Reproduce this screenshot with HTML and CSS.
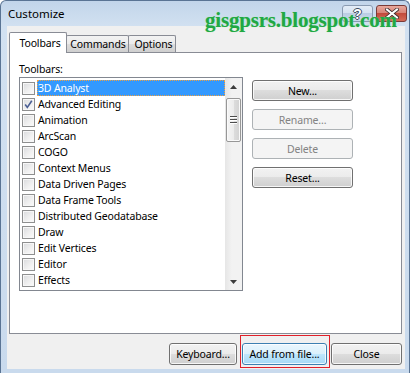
FILE: index.html
```html
<!DOCTYPE html>
<html>
<head>
<meta charset="utf-8">
<title>Customize</title>
<link rel="stylesheet" href="styles.css">
</head>
<body>
<div class="window">
  <div class="titlebar">
    <span class="title">Customize</span>
    <div class="caption-btns">
      <div class="cap help"><span class="q">?</span></div>
      <div class="cap close">
        <svg width="14" height="11" viewBox="0 0 14 11"><path d="M2 1.5 L12 9.5 M12 1.5 L2 9.5" stroke="#3a2a2a" stroke-width="3.6" stroke-linecap="square"/><path d="M2 1.5 L12 9.5 M12 1.5 L2 9.5" stroke="#ffffff" stroke-width="2" stroke-linecap="square"/></svg>
      </div>
    </div>
  </div>
  <div class="watermark">gisgpsrs.blogspot.com</div>
  <div class="client">
    <div class="tabs">
      <div class="tab active">Toolbars</div>
      <div class="tab t-commands">Commands</div>
      <div class="tab t-options">Options</div>
    </div>
    <div class="panel">
      <div class="label">Toolbars:</div>
      <div class="panel-body">
        <div class="listbox">
          <div class="items">
            <div class="item"><span class="cb"></span><span class="txt sel">3D Analyst</span></div>
            <div class="item"><span class="cb"><svg width="11" height="11" viewBox="0 0 11 11"><path d="M2.2 5.6 L4.3 8.4 L8.8 1.8" fill="none" stroke="#4b5f94" stroke-width="1.6"/></svg></span><span class="txt">Advanced Editing</span></div>
            <div class="item"><span class="cb"></span><span class="txt">Animation</span></div>
            <div class="item"><span class="cb"></span><span class="txt">ArcScan</span></div>
            <div class="item"><span class="cb"></span><span class="txt">COGO</span></div>
            <div class="item"><span class="cb"></span><span class="txt">Context Menus</span></div>
            <div class="item"><span class="cb"></span><span class="txt">Data Driven Pages</span></div>
            <div class="item"><span class="cb"></span><span class="txt">Data Frame Tools</span></div>
            <div class="item"><span class="cb"></span><span class="txt">Distributed Geodatabase</span></div>
            <div class="item"><span class="cb"></span><span class="txt">Draw</span></div>
            <div class="item"><span class="cb"></span><span class="txt">Edit Vertices</span></div>
            <div class="item"><span class="cb"></span><span class="txt">Editor</span></div>
            <div class="item"><span class="cb"></span><span class="txt">Effects</span></div>
          </div>
          <div class="scrollbar">
            <div class="sb-btn"><svg width="7" height="4" viewBox="0 0 7 4"><path d="M3.5 0 L7 4 L0 4 Z" fill="#3c3c3c"/></svg></div>
            <div class="sb-track">
              <div class="thumb"><span class="grip"></span><span class="grip"></span><span class="grip"></span></div>
            </div>
            <div class="sb-btn"><svg width="7" height="4" viewBox="0 0 7 4"><path d="M0 0 L7 0 L3.5 4 Z" fill="#3c3c3c"/></svg></div>
          </div>
        </div>
        <div class="side-btns">
          <div class="btn">New...</div>
          <div class="btn disabled">Rename...</div>
          <div class="btn disabled">Delete</div>
          <div class="btn">Reset...</div>
        </div>
      </div>
    </div>
    <div class="footer">
      <div class="btn b-keyboard">Keyboard...</div>
      <div class="annot">
        <div class="btn hot b-add">Add from file...</div>
        <div class="redbox"></div>
      </div>
      <div class="btn b-close">Close</div>
    </div>
  </div>
</div>
</body>
</html>
```

FILE: styles.css
```css
* { box-sizing: border-box; }
html, body { margin: 0; padding: 0; background: #ffffff; }
body {
  width: 414px; height: 373px; overflow: hidden;
  font-family: "Noto Sans", "Open Sans", sans-serif;
  font-size: 10.5px; letter-spacing: -0.15px; color: #000;
}
.window {
  position: relative;
  width: 410px; height: 373px;
  border: 1px solid #5a7494;
  border-bottom: none;
  border-radius: 6px 6px 0 0;
  background: linear-gradient(#c2d5ea 0, #d2e1f1 26px, #c9daed 100%);
  display: flex; flex-direction: column;
  padding: 0 4px 4px 6px;
}
.titlebar {
  height: 25px; flex: none;
  display: flex; align-items: flex-start; justify-content: space-between;
  margin-right: -2px;
}
.title { margin: 5px 0 0 1px; line-height: 16px; font-size: 11.5px; letter-spacing: 0; color: #000; }
.caption-btns { display: flex; gap: 3px; margin-top: 4px; }
.cap {
  height: 17px; border-radius: 3px;
  display: flex; align-items: center; justify-content: center;
}
.help {
  width: 31px;
  border: 1px solid #8a9bb2;
  background: linear-gradient(#e3ecf7 0, #d5e2f1 45%, #bccde3 50%, #c9d9ec 100%);
}
.q {
  font-family: "Liberation Sans", sans-serif; font-weight: bold; font-size: 14px; line-height: 14px; color: #fff;
  text-shadow: -1px 0 #3d4b5e, 1px 0 #3d4b5e, 0 -1px #3d4b5e, 0 1px #3d4b5e;
}
.close {
  width: 31px;
  border: 1px solid #7a3b37;
  background: linear-gradient(#e8a89c 0, #d88477 45%, #c24b3c 50%, #d46a57 100%);
}
.watermark {
  position: absolute; left: 204px; top: 7px;
  font-family: "Liberation Serif", serif; font-weight: bold; font-size: 21px; line-height: 24px;
  color: #20a844; letter-spacing: -0.2px;
  text-shadow: 0 0 1px #9be09b;
  z-index: 5;
}
.client {
  flex: 1;
  background: #f0f0f0;
  display: flex; flex-direction: column;
  padding: 6px 3px 4px 2px;
}
.tabs { display: flex; align-items: flex-end; height: 20px; flex: none; position: relative; z-index: 2; }
.tab {
  height: 17px;
  border: 1px solid #898c95; border-bottom: none;
  border-radius: 2px 2px 0 0;
  background: linear-gradient(#f3f3f3 0, #ebebeb 50%, #dddddd 50%, #cfcfcf 100%);
  display: flex; align-items: center; justify-content: center;
  line-height: 14px; white-space: nowrap;
}
.tab.active {
  width: 58px; height: 21px; margin-bottom: -1px;
  background: #ffffff;
  position: relative; z-index: 3;
  padding: 0 0 1px 4px;
}
.t-commands { width: 63px; margin-left: -1px; padding-left: 1px; }
.t-options { width: 48px; margin-left: -1px; padding-left: 3px; }
.panel {
  height: 282px; flex: none;
  border: 1px solid #898c95;
  background: #ffffff;
  padding: 8px 0 0 9px;
}
.label { height: 16px; line-height: 16px; }
.panel-body { display: flex; align-items: flex-start; }
.listbox {
  width: 224px; height: 214px;
  border: 1px solid #828790;
  background: #fff;
  display: flex;
}
.items { flex: 1; padding-top: 2px; }
.item { height: 16px; display: flex; align-items: center; }
.cb {
  width: 13px; height: 13px; margin-left: 2px; flex: none;
  border: 1px solid #8e8f8f;
  background: linear-gradient(135deg, #d9dadc 0, #f1f1f1 60%, #fbfbfb 100%);
  box-shadow: inset 0 0 0 1px #f7f7f7;
  display: flex; align-items: center; justify-content: center;
}
.txt {
  margin-left: 2px; height: 16px; line-height: 14px; padding-left: 0;
  border: 1px solid transparent;
  white-space: nowrap;
}
.txt.sel {
  flex: 1;
  background: #3399ff; color: #fff;
  border: 1px dotted #f0a040;
}
.scrollbar {
  width: 17px; flex: none;
  display: flex; flex-direction: column;
  background: linear-gradient(to right, #e6e6e6, #f2f2f2 40%, #f2f2f2);
}
.sb-btn { height: 17px; display: flex; align-items: center; justify-content: center; }
.sb-track { flex: 1; padding: 3px 1px 0 1px; }
.thumb {
  height: 44px;
  border: 1px solid #979797; border-radius: 2px;
  background: linear-gradient(to right, #f5f5f5 0, #ececec 50%, #dcdcdc 55%, #d2d2d2 100%);
  box-shadow: inset 0 0 0 1px #fafafa;
  display: flex; flex-direction: column; align-items: center; justify-content: center; gap: 1px;
}
.grip { width: 7px; height: 1px; background: #4d4d4d; box-shadow: 0 1px 0 #fff; margin-bottom: 1px; }
.side-btns {
  margin: 3px 0 0 9px;
  width: 101px;
  display: flex; flex-direction: column; gap: 8px;
}
.btn {
  height: 21px;
  border: 1px solid #707070; border-radius: 3px;
  background: linear-gradient(#f2f2f2 0, #ebebeb 50%, #dddddd 50%, #cfcfcf 100%);
  box-shadow: inset 0 0 0 1px rgba(255,255,255,0.8);
  display: flex; align-items: center; justify-content: center;
  line-height: 14px; white-space: nowrap;
}
.btn.disabled {
  border-color: #adb2b5;
  background: #f4f4f4;
  color: #838383;
  box-shadow: none;
}
.footer {
  margin-top: 9px;
  display: flex; justify-content: flex-end; align-items: flex-start; gap: 4px;
}
.footer .btn { height: 22px; }
.b-keyboard { width: 68px; margin-right: 1px; }
.b-add { width: 85px; }
.b-close { width: 71px; }
.btn.hot {
  border-color: #3c7fb1;
  background: linear-gradient(#eaf6fd 0, #d9f0fc 50%, #bee6fd 50%, #a7d9f5 100%);
}
.annot { position: relative; }
.redbox {
  position: absolute; left: -2px; top: -8px; right: -3px; bottom: -3px;
  border: 1px solid #e0202a;
}
```
